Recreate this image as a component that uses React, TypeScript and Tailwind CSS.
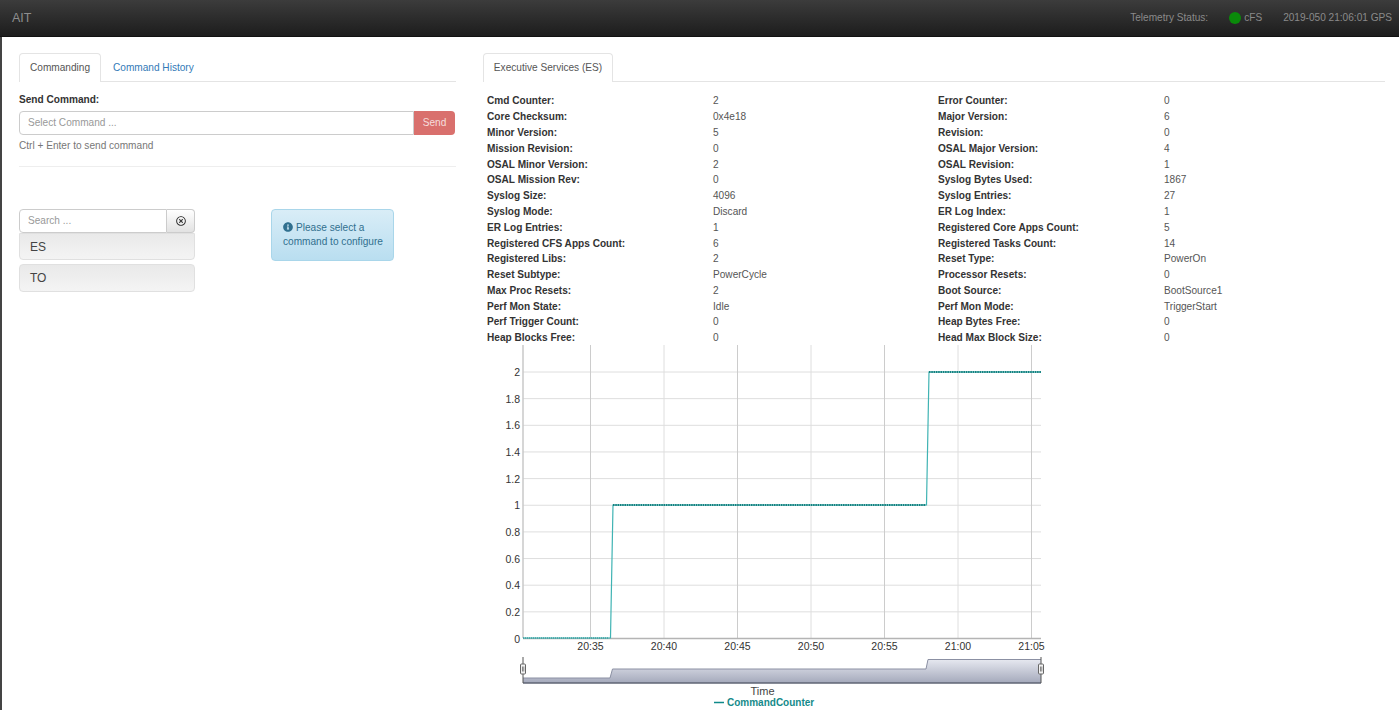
import { FaInfoCircle, FaRegTimesCircle } from "react-icons/fa";

const stats = [
  ["Cmd Counter:", "2", "Error Counter:", "0"],
  ["Core Checksum:", "0x4e18", "Major Version:", "6"],
  ["Minor Version:", "5", "Revision:", "0"],
  ["Mission Revision:", "0", "OSAL Major Version:", "4"],
  ["OSAL Minor Version:", "2", "OSAL Revision:", "1"],
  ["OSAL Mission Rev:", "0", "Syslog Bytes Used:", "1867"],
  ["Syslog Size:", "4096", "Syslog Entries:", "27"],
  ["Syslog Mode:", "Discard", "ER Log Index:", "1"],
  ["ER Log Entries:", "1", "Registered Core Apps Count:", "5"],
  ["Registered CFS Apps Count:", "6", "Registered Tasks Count:", "14"],
  ["Registered Libs:", "2", "Reset Type:", "PowerOn"],
  ["Reset Subtype:", "PowerCycle", "Processor Resets:", "0"],
  ["Max Proc Resets:", "2", "Boot Source:", "BootSource1"],
  ["Perf Mon State:", "Idle", "Perf Mon Mode:", "TriggerStart"],
  ["Perf Trigger Count:", "0", "Heap Bytes Free:", "0"],
  ["Heap Blocks Free:", "0", "Head Max Block Size:", "0"],
];

const yTicks = ["2", "1.8", "1.6", "1.4", "1.2", "1", "0.8", "0.6", "0.4", "0.2", "0"];
const xTicks = ["20:35", "20:40", "20:45", "20:50", "20:55", "21:00", "21:05"];

function Chart() {
  return (
    <svg viewBox="483 345 580 365" className="block w-[580px] h-[365px]" fontFamily="'Liberation Sans', sans-serif">
      <defs>
        <linearGradient id="nav" x1="0" y1="0" x2="0" y2="1">
          <stop offset="0" stopColor="#e6e8f0" />
          <stop offset="1" stopColor="#a4a9bb" />
        </linearGradient>
      </defs>
      {yTicks.map((t, i) => (
        <g key={t}>
          <line x1="523" x2="1041" y1={372 + i * 26.65} y2={372 + i * 26.65} stroke="#dedede" />
          <text x="520" y={376 + i * 26.65} textAnchor="end" fontSize="10.5" fill="#333">{t}</text>
        </g>
      ))}
      {xTicks.map((t, i) => (
        <g key={t}>
          <line x1={590.5 + i * 73.5} x2={590.5 + i * 73.5} y1="345" y2="638" stroke={i % 2 === 0 ? "#cccccc" : "#dedede"} />
          <text x={590.5 + i * 73.5} y="650" textAnchor="middle" fontSize="10.5" fill="#333">{t}</text>
        </g>
      ))}
      <line x1="523" x2="523" y1="345" y2="638" stroke="#c8c8c8" strokeWidth="1.5" />
      <line x1="523" x2="1041" y1="638.5" y2="638.5" stroke="#b4b4b4" strokeWidth="1.5" />
      <path d="M523 638H610.5L613 505H926.5L929 372H1041" fill="none" stroke="#3fb3b3" strokeWidth="1.2" />
      <path d="M523 638H609" fill="none" stroke="#2a9d9d" strokeWidth="2" strokeDasharray="1 1" opacity="0.6" />
      <path d="M613 505H926M929 372H1041" fill="none" stroke="#13807f" strokeWidth="2.2" strokeDasharray="1.5 0.8" />

      <path d="M523 678H610L612.5 669H926L928 659.5H1041V683H523Z" fill="url(#nav)" />
      <path d="M523 678H610L612.5 669H926L928 659.5H1041" fill="none" stroke="#8b90a3" />
      <line x1="523" x2="1041" y1="683" y2="683" stroke="#5f6474" strokeWidth="1.5" />
      <line x1="523" x2="523" y1="657" y2="683" stroke="#555" />
      <line x1="1041" x2="1041" y1="657" y2="683" stroke="#555" />
      {[523, 1041].map((x) => (
        <g key={x}>
          <rect x={x - 2.5} y="664" width="5" height="10" rx="1" fill="#f2f2f2" stroke="#666" />
          <line x1={x - 0.5} x2={x - 0.5} y1="666.5" y2="671.5" stroke="#888" />
          <line x1={x + 0.8} x2={x + 0.8} y1="666.5" y2="671.5" stroke="#888" />
        </g>
      ))}
      <text x="762.5" y="695" textAnchor="middle" fontSize="11" fill="#444">Time</text>
      <line x1="714" x2="724" y1="702.5" y2="702.5" stroke="#0f8a8a" strokeWidth="1.5" />
      <text x="727" y="706" fontSize="10" fontWeight="700" fill="#158a8a">CommandCounter</text>
    </svg>
  );
}

export default function App() {
  return (
    <div className="h-[710px] overflow-hidden bg-white font-['Liberation_Sans',sans-serif] text-[10.1px] text-[#444]">
      <nav className="h-[37px] flex items-center justify-between pl-[12px] pr-[7px] bg-gradient-to-b from-[#3c3c3c] to-[#1d1d1d] border-b border-[#111]">
        <span className="text-[12.5px] text-[#8e8e8e]">AIT</span>
        <div className="flex items-center text-[#8a8a8a]">
          <span>Telemetry Status:</span>
          <span className="ml-[21px] w-[12px] h-[12px] rounded-full bg-[#0a8a0a]"></span>
          <span className="ml-[3px]">cFS</span>
          <span className="ml-[21px]">2019-050 21:06:01 GPS</span>
        </div>
      </nav>

      <div className="flex h-[673px] pt-[16px] pl-[17px] border-l-2 border-[#444]">
        <div className="w-[437px] shrink-0">
          <div className="flex h-[29px] border-b border-[#e4e4e4]">
            <div className="w-[82px] h-[29px] flex items-center justify-center border border-b-0 border-[#e4e4e4] rounded-t bg-white text-[#555]">
              Commanding
            </div>
            <div className="ml-[12px] h-[29px] flex items-center text-[#337ab7]">Command History</div>
          </div>
          <div className="mt-[11px] font-bold text-[#333] leading-[13px]">Send Command:</div>
          <div className="mt-[5px] mr-[1px] flex h-[24px]">
            <div className="flex-1 flex items-center pl-[8px] border border-[#ccc] rounded-l text-[#999]">Select Command ...</div>
            <div className="w-[41px] flex items-center justify-center rounded-r bg-[#d9706d] text-[#f6dedd]">Send</div>
          </div>
          <div className="mt-[4px] leading-[13px] text-[#777]">Ctrl + Enter to send command</div>
          <div className="mt-[14px] border-t border-[#eeeeee]"></div>
          <div className="mt-[42px] flex">
            <div className="w-[176px] shrink-0">
              <div className="flex h-[24px]">
                <div className="flex-1 flex items-center pl-[8px] border border-[#ccc] text-[#999] rounded-l">Search ...</div>
                <div className="w-[28px] flex items-center justify-center border border-l-0 border-[#ccc] rounded-r bg-gradient-to-b from-white to-[#e2e2e2] text-[#333]">
                  <FaRegTimesCircle className="w-[10px] h-[10px]" />
                </div>
              </div>
              <div className="h-[27px] flex items-center pl-[10px] text-[12px] text-[#444] border border-[#e0e0e0] rounded-b bg-gradient-to-b from-[#e9e9e9] to-[#f4f4f4]">ES</div>
              <div className="mt-[4px] h-[28px] flex items-center pl-[10px] text-[12px] text-[#444] border border-[#e0e0e0] rounded bg-gradient-to-b from-[#e9e9e9] to-[#f4f4f4]">TO</div>
            </div>
            <div className="ml-[76px] w-[123px] h-[52px] pl-[11px] pr-[6px] pt-[11px] rounded border border-[#a9d6ea] bg-gradient-to-b from-[#d9edf7] to-[#b9def0] text-[#31708f] leading-[14px]">
              <FaInfoCircle className="inline w-[10px] h-[10px] mr-[3px] align-[-1px]" />
              Please select a command to configure
            </div>
          </div>
        </div>

        <div className="ml-[27px] w-[902px] shrink-0">
          <div className="flex h-[29px] border-b border-[#e4e4e4]">
            <div className="w-[130px] h-[29px] flex items-center justify-center border border-b-0 border-[#e4e4e4] rounded-t bg-white text-[#555]">
              Executive Services (ES)
            </div>
          </div>
          <div className="mt-[10px] pl-[4px] grid grid-cols-[226px_225px_226px_225px] auto-rows-[15.8px] items-center">
            {stats.map((row) => (
              <div key={row[0]} className="contents">
                <span className="font-bold text-[#333] translate-y-[0.7px]">{row[0]}</span>
                <span className="text-[#555] translate-y-[0.7px]">{row[1]}</span>
                <span className="font-bold text-[#333] translate-y-[0.7px]">{row[2]}</span>
                <span className="text-[#555] translate-y-[0.7px]">{row[3]}</span>
              </div>
            ))}
          </div>
          <Chart />
        </div>
      </div>
    </div>
  );
}
